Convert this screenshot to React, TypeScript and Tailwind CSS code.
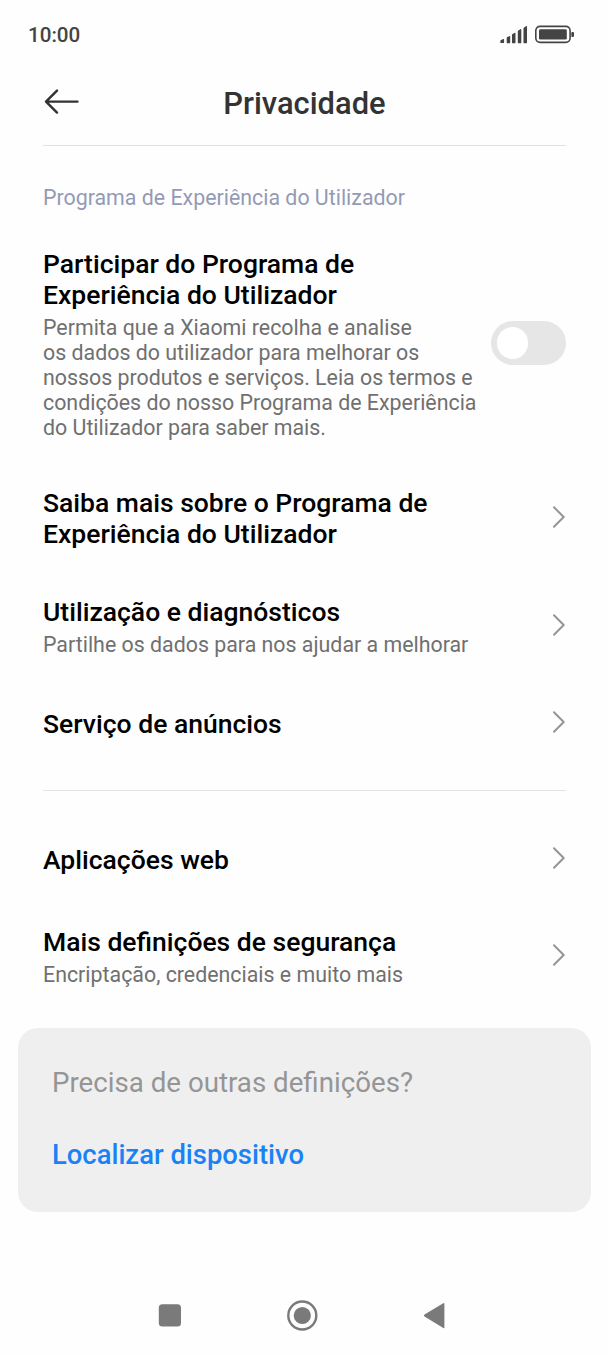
import clsx from "clsx";

interface ItemProps {
	title: string;
	subtitle?: string;
	className?: string;
}

const Chevron = () => (
	<svg className="-mt-[4px] shrink-0" width="14" height="24" viewBox="0 0 14 24" fill="none" stroke="#959595" strokeWidth="2" strokeLinecap="round" strokeLinejoin="round">
		<path d="M2 2.3L11.7 12L2 21.7" />
	</svg>
)

function Item({ title, subtitle, className }: ItemProps) {
	return (
		<a href="#" className={clsx("flex items-center justify-between", className)}>
			<div className="flex flex-col gap-[4px]">
				<h2 className="-mt-[1px] mb-[1px] w-[430px] text-[26.5px] leading-[31px] font-medium text-black">{title}</h2>
				{subtitle && <p className="text-[21.36px] leading-[25px] text-[#707070]">{subtitle}</p>}
			</div>
			<Chevron />
		</a>
	)
}

function StatusBar() {
	return (
		<div className="flex h-[68px] items-center justify-between pl-[28px] pr-[34px]">
			<span className="mt-[2px] text-[20.6px] leading-[24px] font-medium text-[#444444]">10:00</span>
			<svg width="76" height="20" viewBox="499 25 76 20" className="mt-[2px]">
				<g fill="#444444">
					<path d="M500.3 43.2v-2.2q0-.8.8-1.1l2.2-.8q.8-.2.8.6v2.5q0 .9-.9.9h-2q-.9 0-.9-.9z" />
					<path d="M506.7 42.4v-4.4q0-.6.6-.9l1.8-.9q1.1-.4 1.1.5v5.7q0 .9-.9.9h-1.7q-.9 0-.9-.9z" />
					<path d="M512 42.4v-7.5q0-.6.6-.9l1.8-1.1q1.1-.4 1.1.5v9q0 .9-.9.9h-1.7q-.9 0-.9-.9z" />
					<path d="M517.8 42.4v-11q0-.6.6-.9l1.8-1.3q1.1-.5 1.1.5v12.7q0 .9-.9.9h-1.7q-.9 0-.9-.9z" />
					<path d="M523.5 42.4v-14.1q0-.6.6-.9l1.8-1.2q1.1-.4 1.1.5v15.7q0 .9-.9.9h-1.7q-.9 0-.9-.9z" />
					<rect x="539" y="29.2" width="27.8" height="10.4" rx="1.4" />
					<rect x="571.3" y="32" width="2.7" height="5" rx="1" />
				</g>
				<rect x="535.8" y="26.4" width="34.3" height="16" rx="4.3" fill="none" stroke="#444444" strokeWidth="1.6" />
			</svg>
		</div>
	)
}

function Header() {
	return (
		<header className="mx-[43px] grid h-[78px] grid-cols-[1fr_auto_1fr] items-center border-b border-[#e2e2e2]">
			<svg width="36" height="26" viewBox="0 0 36 26" className="-mt-[10px]" fill="none" stroke="#333333" strokeWidth="2.4" strokeLinecap="round" strokeLinejoin="round">
				<path d="M34.5 12.6H3M14 1.6L3 12.6L14 23.6" />
			</svg>
			<h1 className="-mt-[5px] text-[30.9px] leading-[36px] font-medium text-[#333333]">Privacidade</h1>
		</header>
	)
}

function NavBar() {
	return (
		<nav className="mt-[84px] flex items-center pl-[158px]">
			<svg width="290" height="40" viewBox="158 1296 290 40" fill="#7a7a7a">
				<rect x="158.8" y="1304.2" width="22.2" height="22.4" rx="3.6" />
				<circle cx="302.3" cy="1315.5" r="14" fill="none" stroke="#7a7a7a" strokeWidth="2.4" />
				<circle cx="302.3" cy="1315.5" r="8.6" />
				<path d="M424.5 1314.6L443.3 1303.2Q444.4 1302.6 444.4 1303.9V1327.2Q444.4 1328.6 443.3 1327.9L424.5 1316.4Q423.2 1315.5 424.5 1314.6Z" />
			</svg>
		</nav>
	)
}

function App() {
	return (
		<main className="h-[1354px] w-[609px] overflow-hidden bg-[#fefefe] font-['Roboto',sans-serif]">
			<StatusBar />
			<Header />

			<section className="mx-[43px] flex flex-col border-b border-[#e4e4e4] pt-[39px] pb-[50px]">
				<h3 className="text-[21.36px] leading-[25px] text-[#949ab5]">Programa de Experiência do Utilizador</h3>

				<div className="mt-[39px] flex items-center justify-between">
					<div className="flex flex-col gap-[5px]">
						<h2 className="-mt-[1px] mb-[1px] w-[330px] text-[26.5px] leading-[31px] font-medium text-black">Participar do Programa de Experiência do Utilizador</h2>
						<p className="text-[21.36px] leading-[24.9px] whitespace-nowrap text-[#707070]">
							Permita que a Xiaomi recolha e analise<br />
							os dados do utilizador para melhorar os<br />
							nossos produtos e serviços. Leia os termos e<br />
							condições do nosso Programa de Experiência<br />
							do Utilizador para saber mais.
						</p>
					</div>
					<button type="button" role="switch" aria-checked="false" className="-mt-[4px] -ml-[20px] flex h-[44px] w-[75.5px] shrink-0 items-center rounded-full bg-[#e6e6e6] pl-[6px]">
						<span className="size-[31.5px] rounded-full bg-white"></span>
					</button>
				</div>

				<Item title="Saiba mais sobre o Programa de Experiência do Utilizador" className="mt-[47px]" />
				<Item title="Utilização e diagnósticos" subtitle="Partilhe os dados para nos ajudar a melhorar" className="mt-[47.5px]" />
				<Item title="Serviço de anúncios" className="mt-[51.5px]" />
			</section>

			<section className="mx-[43px] flex flex-col pt-[54px]">
				<Item title="Aplicações web" />
				<Item title="Mais definições de segurança" subtitle="Encriptação, credenciais e muito mais" className="mt-[51px]" />
			</section>

			<section className="mt-[41px] mr-[18px] ml-[18px] flex h-[184px] flex-col gap-[40px] rounded-[20px] bg-[#efefef] pt-[39px] pl-[34px]">
				<p className="text-[27.7px] leading-[32px] text-[#959595]">Precisa de outras definições?</p>
				<a href="#" className="text-[27.4px] leading-[32px] font-medium text-[#1a82f5]">Localizar dispositivo</a>
			</section>

			<NavBar />
		</main>
	)
}

export default App
